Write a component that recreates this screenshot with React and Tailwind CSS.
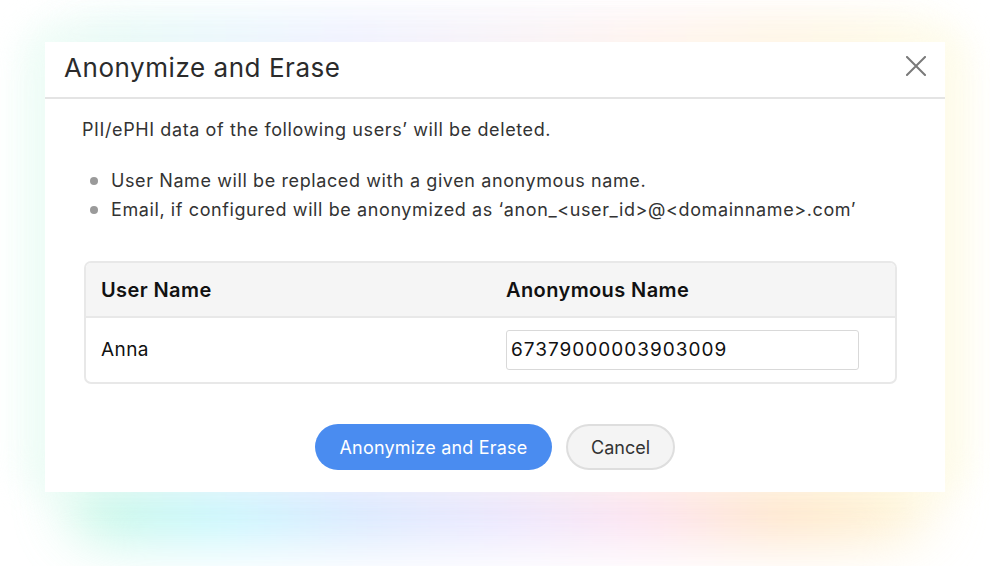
const App = () => {
  return (
    <div className="relative w-[990px] h-[566px] bg-white overflow-hidden font-['Inter',sans-serif] text-[#333]">
      {/* Glow behind the dialog */}
      <div className="absolute left-[70px] top-[40px] w-[860px] h-[500px] rounded-[40px] bg-[linear-gradient(to_right,#a7f3d0,#a5f3fc,#bfdbfe,#ddd6fe,#fbcfe8,#fed7aa,#fef3c7)] blur-[28px] opacity-70" />
      <div className="absolute left-[20px] top-[20px] w-[950px] h-[480px] rounded-[40px] bg-[linear-gradient(to_right,#ecfdf5,#f5f3ff,#fff7ed,#fefce8)] blur-[16px] opacity-80" />

      {/* Dialog */}
      <div className="relative ml-[45px] mt-[42px] w-[900px] h-[450px] bg-white flex flex-col">
        <div className="h-[57px] flex items-center justify-between pl-[19px] pr-[19px] pb-[4px] border-b-2 border-[#e4e4e4]">
          <h1 className="text-[26px] leading-none tracking-[0.55px] text-[#2b2b2b]">Anonymize and Erase</h1>
          <svg width="20" height="20" viewBox="0 0 20 20" className="mb-[3px]">
            <path d="M1 1L19 19M19 1L1 19" stroke="#7a7a7a" strokeWidth="2" strokeLinecap="square" />
          </svg>
        </div>

        <div className="px-[37px] pt-[19px]">
          <p className="text-[18px] leading-[24px] tracking-[0.6px] text-[#333]">PII/ePHI data of the following users’ will be deleted.</p>
          <ul className="mt-[27px] pl-[8px] flex flex-col gap-[5px]">
            <li className="flex items-center gap-[13px] text-[18px] leading-[24px] tracking-[0.6px]">
              <span className="w-[8px] h-[8px] rounded-full bg-[#9a9a9a]" />
              User Name will be replaced with a given anonymous name.
            </li>
            <li className="flex items-center gap-[13px] text-[18px] leading-[24px] tracking-[0.6px]">
              <span className="w-[8px] h-[8px] rounded-full bg-[#9a9a9a]" />
              Email, if configured will be anonymized as ‘anon_&lt;user_id&gt;@&lt;domainname&gt;.com’
            </li>
          </ul>

          <div className="mt-[39px] mx-[2px] w-[813px] border-2 border-[#e8e8e8] rounded-[7px] overflow-hidden">
            <div className="h-[55px] bg-[#f5f5f5] border-b-2 border-[#e8e8e8] grid grid-cols-[405px_1fr] items-center pl-[15px]">
              <span className="text-[20px] font-semibold tracking-[0.4px] text-[#111]">User Name</span>
              <span className="text-[20px] font-semibold tracking-[0.4px] text-[#111]">Anonymous Name</span>
            </div>
            <div className="h-[64px] grid grid-cols-[405px_1fr] items-center pl-[15px]">
              <span className="text-[19px] tracking-[0.4px] text-[#111]">Anna</span>
              <div className="w-[353px] h-[40px] border border-[#d9d9d9] rounded-[3px] flex items-center pl-[4px] text-[19px] tracking-[1px] text-[#111]">
                67379000003903009
              </div>
            </div>
          </div>

          <div className="mt-[40px] flex justify-center gap-[14px]">
            <button className="w-[237px] h-[46px] rounded-full bg-[#4a8cf0] text-white text-[18px] tracking-[0.2px]">
              Anonymize and Erase
            </button>
            <button className="w-[109px] h-[46px] rounded-full bg-[#f4f4f4] border-2 border-[#dedede] text-[#333] text-[18px]">
              Cancel
            </button>
          </div>
        </div>
      </div>
    </div>
  );
};

export default App;
